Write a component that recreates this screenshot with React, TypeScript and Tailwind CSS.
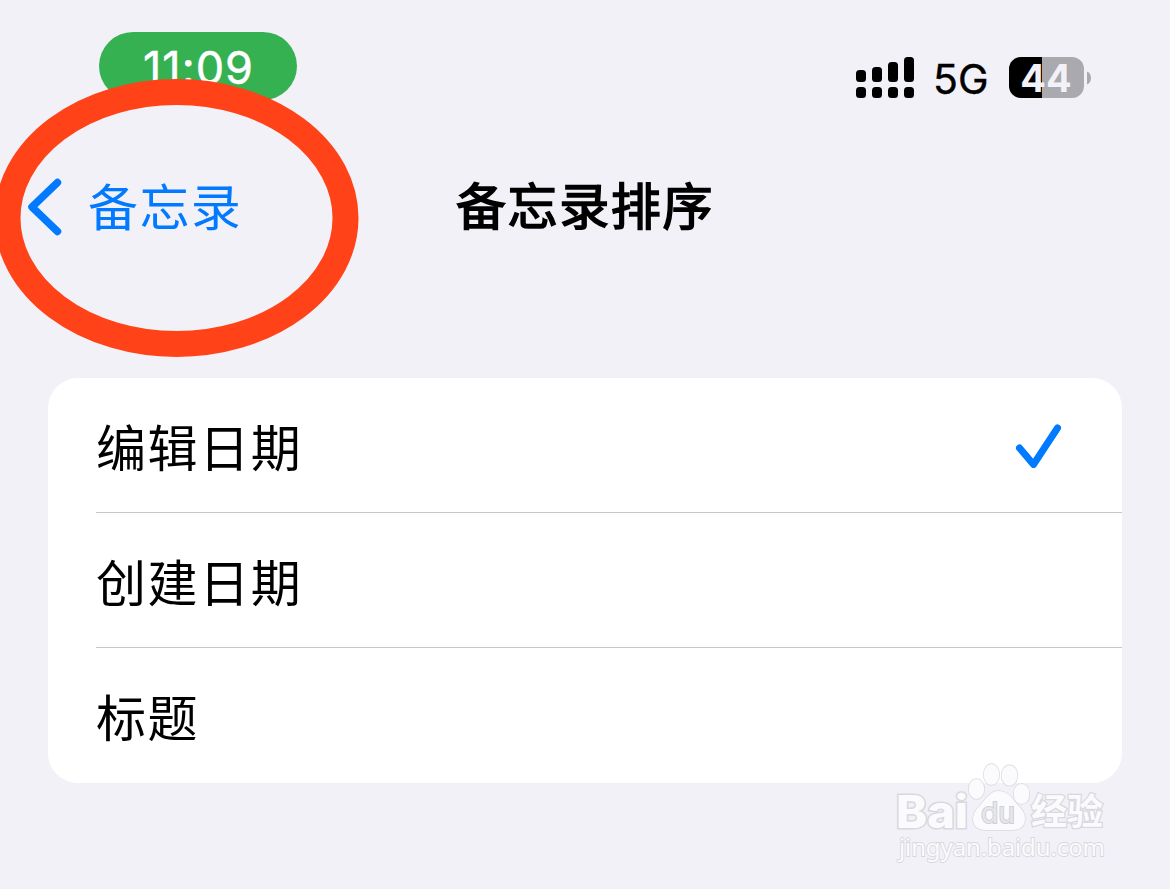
import React from "react";

const cjk = "font-['Inter','Noto_Sans_CJK_SC',sans-serif]";

function StatusBar() {
  return (
    <header className="flex h-[130px] shrink-0 items-start justify-between pl-[99px] pr-[79px] pt-8">
      <div className="flex h-[68px] w-[198px] items-center justify-center rounded-[34px] bg-[#36b152]">
        <span className="pl-px pt-[3px] font-['Inter',sans-serif] text-[45px] leading-none tracking-[1px] text-white [-webkit-text-stroke:0.5px_white]">
          11:09
        </span>
      </div>
      <div className="mt-[25px] flex h-[41px] items-center">
        <svg width="58" height="41" viewBox="0 0 58 41" className="shrink-0">
          <rect x="0" y="13" width="10" height="12" rx="3.5" />
          <rect x="16" y="10" width="10" height="15" rx="3.5" />
          <rect x="32" y="5" width="10" height="20" rx="3.5" />
          <rect x="48" y="0" width="10" height="25" rx="3.5" />
          <rect x="0" y="30" width="10" height="11" rx="3.5" />
          <rect x="16" y="30" width="10" height="11" rx="3.5" />
          <rect x="32" y="30" width="10" height="11" rx="3.5" />
          <rect x="48" y="30" width="10" height="11" rx="3.5" />
        </svg>
        <span className="ml-[19px] w-[56px] pt-1 font-['Inter',sans-serif] text-[41px] leading-none tracking-[0px] text-black [-webkit-text-stroke:0.4px_black]">
          5G
        </span>
        <div className="ml-5 flex h-[41px] w-[75px] items-center justify-center rounded-[12px] bg-[linear-gradient(90deg,#000_33px,#a9a9ae_33px)]">
          <span className="pr-px font-['Inter',sans-serif] text-[38px] font-bold leading-none text-[#f2f1f7]">
            44
          </span>
        </div>
        <svg width="4" height="14" viewBox="0 0 4 14" className="ml-[3px]">
          <path d="M0 0.5C5.3 2.5 5.3 11.5 0 13.5Z" fill="#a9a9ae" />
        </svg>
      </div>
    </header>
  );
}

function NavBar() {
  return (
    <nav className="grid h-[154px] shrink-0 grid-cols-[1fr_auto_1fr] items-center">
      <div className="flex items-center pl-[27px] text-[#017aff]">
        <svg width="36" height="60" viewBox="0 0 36 60" fill="none">
          <path
            d="M30.5 5.5L5 30L30.5 54.5"
            stroke="currentColor"
            strokeWidth="7.5"
            strokeLinecap="round"
            strokeLinejoin="round"
          />
        </svg>
        <span className="ml-[25px] pt-0.5 text-[50px] leading-none tracking-[1.4px]">备忘录</span>
      </div>
      <h1 className="text-[50px] leading-none tracking-[1.6px] text-black [-webkit-text-stroke:1.6px_black]">备忘录排序</h1>
    </nav>
  );
}

function Row({ label, checked = false, last = false }: { label: string; checked?: boolean; last?: boolean }) {
  return (
    <li
      className={`ml-12 flex h-[135px] items-center justify-between border-b pr-[60px] ${last ? "border-transparent" : "border-[#c6c6c8]"}`}
    >
      <span className="pt-2 text-[50px] leading-none tracking-[1.6px] text-black">{label}</span>
      {checked && (
        <svg width="47" height="46" viewBox="0 0 47 46" fill="none">
          <path
            d="M4.5 26L18.5 42.5L42.5 6"
            stroke="#017aff"
            strokeWidth="7"
            strokeLinecap="round"
            strokeLinejoin="round"
          />
        </svg>
      )}
    </li>
  );
}

function Watermark() {
  return (
    <svg
      width="230"
      height="110"
      viewBox="885 755 230 110"
      className="absolute left-[885px] top-[755px]"
      fill="#fbfbfd"
      stroke="#d8d8de"
      strokeWidth="1.4"
      paintOrder="stroke"
    >
      <text x="896" y="828" fontSize="45" fontWeight="800" textLength="72" lengthAdjust="spacingAndGlyphs" className="font-['Inter',sans-serif]" strokeWidth="3">
        Bai
      </text>
      <ellipse cx="976.5" cy="789" rx="7.8" ry="10" />
      <ellipse cx="991.5" cy="774.5" rx="7.8" ry="10.5" />
      <ellipse cx="1009.5" cy="775.5" rx="8" ry="10.2" />
      <rect x="1014" y="784" width="15" height="20" rx="7.5" />
      <path d="M998.5 791C1007 791 1012 797 1016 803C1020 808 1025 811 1025 819C1025 827 1019 830 1012 830H985C978 830 973 826 973 819C973 811 979 807 983 802C987 797 991 791 998.5 791Z" />
      <text x="981" y="823" fontSize="29" fontWeight="400" textLength="34" lengthAdjust="spacingAndGlyphs" className="font-['Inter',sans-serif]" fill="#e6e6eb" stroke="#cfcfd5" strokeWidth="2">
        du
      </text>
      <text x="1031" y="825" fontSize="36" fontWeight="700" className="font-['Noto_Sans_CJK_SC',sans-serif]" strokeWidth="2.5">
        经验
      </text>
      <text x="899" y="856" fontSize="24" textLength="206" className="font-['Noto_Sans',sans-serif]" strokeWidth="1.8">
        jingyan.baidu.com
      </text>
    </svg>
  );
}

export default function App() {
  return (
    <main className={`relative flex h-[889px] w-[1170px] flex-col overflow-hidden bg-[#f2f1f7] ${cjk}`}>
      <StatusBar />
      <NavBar />
      <ul className="mx-12 mt-[94px] h-[405px] overflow-hidden rounded-[30px] bg-white">
        <Row label="编辑日期" checked />
        <Row label="创建日期" />
        <Row label="标题" last />
      </ul>
      <svg width="370" height="290" viewBox="-10 73 370 290" fill="none" className="absolute left-[-10px] top-[73px]">
        <ellipse cx="176.5" cy="218" rx="169" ry="126" stroke="#ff4218" strokeWidth="26" />
      </svg>
      <Watermark />
    </main>
  );
}
